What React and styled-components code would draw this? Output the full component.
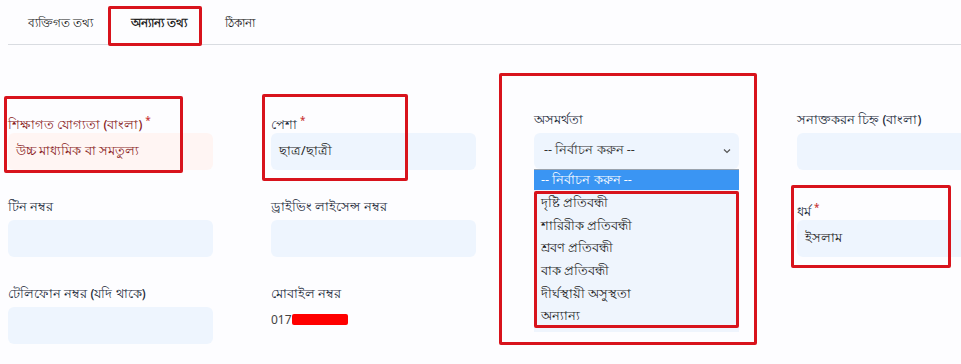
import React from 'react'
import styled, { createGlobalStyle } from 'styled-components';

const GlobalStyle = createGlobalStyle`
  html, body {
    margin: 0;
    padding: 0;
    background: #fdfdff;
    overflow: hidden;
  }
  body {
    font-family: "Noto Sans", "DejaVu Sans", sans-serif;
    color: #1c2a3a;
  }
`;

const Page = styled.div`
  position: relative;
  width: 961px;
  height: 364px;
  overflow: hidden;
`;

const TabBar = styled.div`
  display: flex;
  margin-left: 8px;
  height: 44px;
  border-bottom: 1px solid #d9dce1;
`;

const Tab = styled.div`
  display: flex;
  align-items: center;
  padding: 5px 18px 0 20px;
  font-size: 11.5px;
  color: #222;
  font-weight: ${(p) => (p.active ? 700 : 400)};
`;

const Grid = styled.div`
  display: grid;
  grid-template-columns: repeat(4, 205px);
  column-gap: 58px;
  row-gap: 28px;
  padding: 66px 0 0 8px;
`;

const Field = styled.div`
  position: relative;
  display: flex;
  flex-direction: column;
  gap: 4px;
`;

const Label = styled.div`
  height: 18px;
  line-height: 18px;
  font-size: 12.5px;
  font-weight: 500;
  color: ${(p) => (p.error ? '#8a1c1c' : '#1c2a3a')};
  white-space: nowrap;
  & sup {
    color: #c93535;
    font-size: 10px;
    margin-left: 3px;
  }
`;

const Input = styled.div`
  height: 37px;
  box-sizing: border-box;
  border-radius: 6px;
  padding: 0 8px;
  display: flex;
  align-items: center;
  font-size: 12.5px;
  background: ${(p) => (p.error ? '#fff5f3' : '#eef5fe')};
  color: ${(p) => (p.error ? '#8a1c1c' : '#222')};
`;

const Select = styled(Input)`
  height: 36px;
  padding: 0 8px 0 10px;
  justify-content: space-between;
  color: #333;
`;

const Dropdown = styled.div`
  position: absolute;
  top: 58px;
  left: 0;
  width: 205px;
  box-sizing: border-box;
  background: #eff5fd;
  border-top: 1px solid #9aa3ad;
  z-index: 2;
  padding-bottom: 4px;
`;

const Option = styled.div`
  height: ${(p) => (p.active ? '20px' : '22.7px')};
  line-height: ${(p) => (p.active ? '20px' : '22.7px')};
  padding: 0 7px;
  font-size: 12.5px;
  background: ${(p) => (p.active ? '#3a95f3' : 'transparent')};
  color: ${(p) => (p.active ? '#fff' : '#1e1e1e')};
  &:first-of-type {
    margin-bottom: 2px;
  }
`;

const PlainValue = styled.div`
  display: flex;
  align-items: center;
  height: 20px;
  margin-top: 2px;
  font-size: 12px;
  color: #444;
`;

const Redacted = styled.span`
  display: inline-block;
  width: 56px;
  height: 11px;
  border-radius: 2px;
  background: #ff0000;
`;

const Mark = styled.div`
  position: absolute;
  border: 3px solid #d8131c;
  border-radius: 2px;
  box-sizing: border-box;
  pointer-events: none;
  z-index: 5;
`;

const Chevron = () => (
  <svg width="8" height="6" viewBox="0 0 8 6" fill="none">
    <path d="M1 1.5 L4 4.5 L7 1.5" stroke="#555" strokeWidth="1.2" />
  </svg>
);

const options = [
  'দৃষ্টি প্রতিবন্ধী',
  'শারিরীক প্রতিবন্ধী',
  'শ্রবণ প্রতিবন্ধী',
  'বাক প্রতিবন্ধী',
  'দীর্ঘস্থায়ী অসুস্থতা',
  'অন্যান্য',
];

const marks = [
  { x: 108, y: 6, w: 94, h: 40 },
  { x: 4, y: 96, w: 179, h: 77 },
  { x: 262, y: 94, w: 146, h: 87 },
  { x: 499, y: 73, w: 258, h: 272 },
  { x: 534, y: 191, w: 205, h: 137 },
  { x: 791, y: 185, w: 160, h: 83 },
];

const App = () => {
  return (
    <Page>
      <GlobalStyle />
      <TabBar>
        <Tab>ব্যক্তিগত তথ্য</Tab>
        <Tab active>অন্যান্য তথ্য</Tab>
        <Tab>ঠিকানা</Tab>
      </TabBar>

      <Grid>
        <Field>
          <Label error>শিক্ষাগত যোগ্যতা (বাংলা)<sup>*</sup></Label>
          <Input error>উচ্চ মাধ্যমিক বা সমতুল্য</Input>
        </Field>
        <Field>
          <Label>পেশা<sup>*</sup></Label>
          <Input>ছাত্র/ছাত্রী</Input>
        </Field>
        <Field>
          <Label>অসমর্থতা</Label>
          <Select>
            -- নির্বাচন করুন --
            <Chevron />
          </Select>
          <Dropdown>
            <Option active>-- নির্বাচন করুন --</Option>
            {options.map((o) => (
              <Option key={o}>{o}</Option>
            ))}
          </Dropdown>
        </Field>
        <Field>
          <Label>সনাক্তকরন চিহ্ন (বাংলা)</Label>
          <Input />
        </Field>

        <Field>
          <Label>টিন নম্বর</Label>
          <Input />
        </Field>
        <Field>
          <Label>ড্রাইভিং লাইসেন্স নম্বর</Label>
          <Input />
        </Field>
        <Field />
        <Field>
          <Label>ধর্ম<sup>*</sup></Label>
          <Input>ইসলাম</Input>
        </Field>

        <Field>
          <Label>টেলিফোন নম্বর (যদি থাকে)</Label>
          <Input />
        </Field>
        <Field>
          <Label>মোবাইল নম্বর</Label>
          <PlainValue>017<Redacted /></PlainValue>
        </Field>
      </Grid>

      {marks.map((m, i) => (
        <Mark key={i} style={{ left: m.x, top: m.y, width: m.w, height: m.h }} />
      ))}
    </Page>
  )
}

export default App;
